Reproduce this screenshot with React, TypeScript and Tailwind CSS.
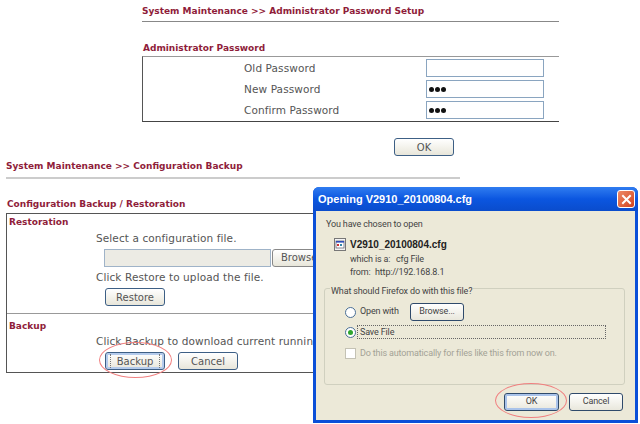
const dv = "font-['DejaVu_Sans',sans-serif]";
const bodyText = `text-[10.5px] leading-[13px] text-[#555] tracking-[0.1px] whitespace-nowrap ${dv}`;

function PageButton({ label, className = '', focused }: { label: string; className?: string; focused?: boolean }) {
  return (
    <div className={`w-[60px] h-[18px] flex items-center justify-center rounded-[3px] border border-[#3d5f85] bg-gradient-to-b from-white to-[#e8e6da] text-[10px] text-[#555] ${dv} ${className}`}>
      {focused ? (
        <div className="w-[50px] h-[14px] flex items-center justify-center border-x border-dotted border-[#777]">{label}</div>
      ) : (
        label
      )}
    </div>
  );
}

function PasswordRow({ label, dots }: { label: string; dots?: boolean }) {
  return (
    <div className="flex items-center h-[18px]">
      <div className={`w-[182px] ${bodyText}`}>{label}</div>
      <div className="w-[118px] h-[18px] border border-[#8aa5c0] bg-white flex items-center pl-[2px] gap-px">
        {dots && (
          <>
            <span className="w-[5px] h-[5px] rounded-full bg-[#111]" />
            <span className="w-[5px] h-[5px] rounded-full bg-[#111]" />
            <span className="w-[5px] h-[5px] rounded-full bg-[#111]" />
          </>
        )}
      </div>
    </div>
  );
}

function Heading({ children, className = '' }: { children: React.ReactNode; className?: string }) {
  return <div className={`font-bold text-[#8f1d3a] text-[9px] whitespace-nowrap leading-[12px] ${dv} ${className}`}>{children}</div>;
}

function DialogButton({ label, className = '' }: { label: string; className?: string }) {
  return (
    <div className={`flex items-center justify-center rounded-[3px] border border-[#2f4a6b] bg-gradient-to-b from-white to-[#e9e7dc] text-[9px] text-[#444] ${className}`}>
      {label}
    </div>
  );
}

function RedEllipse({ className }: { className: string }) {
  return <div className={`absolute rounded-[50%] border border-[#f08080] ${className}`} />;
}

function OpenDialog() {
  return (
    <div className="absolute left-[313px] top-[187px] w-[325px] h-[236px] flex flex-col rounded-t-[6px] bg-[#0a4fd8] font-['Roboto',sans-serif]">
      <div className="h-[24px] shrink-0 flex items-center justify-between pl-[5px] pr-[3px] rounded-t-[6px] bg-gradient-to-b from-[#2f7cf0] via-[#0b56e0] to-[#0a4ccc]">
        <span className="font-bold text-[11px] text-white whitespace-nowrap font-['Liberation_Sans',sans-serif]">Opening V2910_20100804.cfg</span>
        <div className="w-[18px] h-[18px] rounded-[3px] border border-white bg-gradient-to-br from-[#ee8a66] to-[#d0401c] flex items-center justify-center">
          <svg width="11" height="11" viewBox="0 0 11 11">
            <path d="M2 2 L9 9 M9 2 L2 9" stroke="white" strokeWidth="2" strokeLinecap="square" />
          </svg>
        </div>
      </div>
      <div className="flex-1 mx-[3px] mb-[3px] bg-[#ece9d8] pt-[6px] px-[8px] text-[9px] tracking-[-0.15px] text-[#444] flex flex-col">
        <div className="h-[14px] leading-[14px] ml-[2px]">You have chosen to open</div>
        <div className="flex items-center h-[14px] mt-[6px] ml-[10px] gap-[4px]">
          <svg width="12" height="13" viewBox="0 0 12 13" className="shrink-0">
            <rect x="0.5" y="0.5" width="11" height="12" fill="#f4f4f4" stroke="#777" />
            <rect x="2" y="3" width="8" height="7" fill="#fff" stroke="#556" strokeWidth="0.7" />
            <rect x="2" y="3" width="8" height="1.6" fill="#2e4bb5" />
            <rect x="3" y="6" width="2" height="2" fill="#c33" />
            <rect x="6" y="6" width="2" height="2" fill="#38a" />
          </svg>
          <span className="font-bold text-[10px] tracking-normal text-[#222] whitespace-nowrap font-['Liberation_Sans',sans-serif]">V2910_20100804.cfg</span>
        </div>
        <div className="flex h-[13px] leading-[13px] mt-[2px] ml-[26px] whitespace-nowrap">
          <span className="w-[46px]">which is a:</span>
          <span>cfg File</span>
        </div>
        <div className="flex h-[13px] leading-[13px] ml-[26px] whitespace-nowrap">
          <span className="w-[25px]">from:</span>
          <span>http://192.168.8.1</span>
        </div>
        <div className="relative mt-[9px] w-[301px] h-[97px] rounded-[3px] border border-[#d0d0bf] pl-[20px]">
          <div className="absolute left-[5px] -top-[4px] bg-[#ece9d8] px-[1px] leading-[12px] whitespace-nowrap">What should Firefox do with this file?</div>
          <div className="flex items-center h-[18px] mt-[14px]">
            <div className="w-[11px] h-[11px] rounded-full border border-[#4a6f96] bg-white" />
            <span className="ml-[4px] w-[50px]">Open with</span>
            <DialogButton label="Browse..." className="w-[54px] h-[18px]" />
          </div>
          <div className="flex items-center h-[14px] mt-[4px]">
            <div className="w-[11px] h-[11px] rounded-full border border-[#4a6f96] bg-white flex items-center justify-center">
              <div className="w-[5px] h-[5px] rounded-full bg-[#2fa52f]" />
            </div>
            <div className="ml-[1px] w-[249px] h-[14px] border border-dotted border-[#666] pl-[2px] leading-[12px]">Save File</div>
          </div>
          <div className="flex items-center h-[11px] mt-[9px]">
            <div className="w-[11px] h-[11px] border border-[#c4c2b4] bg-white" />
            <span className="ml-[4px] text-[#a3a296] whitespace-nowrap">Do this automatically for files like this from now on.</span>
          </div>
        </div>
        <div className="flex justify-end gap-[10px] mt-[8px] w-[301px]">
          <DialogButton label="OK" className="w-[55px] h-[18px] shadow-[inset_0_0_0_2px_#a9c3ea]" />
          <DialogButton label="Cancel" className="w-[54px] h-[18px] mr-[2px]" />
        </div>
      </div>
    </div>
  );
}

export default function App() {
  return (
    <div className="relative w-[640px] h-[424px] overflow-hidden bg-white">
      {/* Administrator password */}
      <div className="ml-[142px] w-[417px] pt-[5px]">
        <Heading>System Maintenance &gt;&gt; Administrator Password Setup</Heading>
        <div className="mt-[4px] h-px bg-[#888]" />
        <Heading className="mt-[20px] ml-px">Administrator Password</Heading>
        <div className="mt-[2px] h-[66px] border-t border-b border-l border-t-[#999] border-b-[#444] border-l-[#555] pl-[101px] pt-[2px] flex flex-col gap-[3px]">
          <PasswordRow label="Old Password" />
          <PasswordRow label="New Password" dots />
          <PasswordRow label="Confirm Password" dots />
        </div>
        <PageButton label="OK" className="mt-[16px] ml-[252px]" />
      </div>

      {/* Configuration backup */}
      <div className="ml-[6px] w-[454px] mt-[4px]">
        <Heading>System Maintenance &gt;&gt; Configuration Backup</Heading>
        <div className="mt-[5px] h-[2px] bg-[#ccc]" />
        <Heading className="mt-[19px] ml-px">Configuration Backup / Restoration</Heading>
        <div className="mt-[3px] h-[160px] border border-[#555] pl-[2px] pt-[2px]">
          <Heading>Restoration</Heading>
          <div className="pl-[87px]">
            <div className={`mt-[4px] ${bodyText}`}>Select a configuration file.</div>
            <div className="flex mt-[4px] ml-[8px]">
              <div className="w-[167px] h-[18px] border border-[#9fb3c8] bg-[#ecebe4]" />
              <div className={`w-[60px] h-[18px] ml-px rounded-[3px] border border-[#888] bg-gradient-to-b from-white to-[#e8e6da] text-[10px] text-[#555] pl-[8px] leading-[16px] ${dv}`}>Browse</div>
            </div>
            <div className={`mt-[4px] ${bodyText}`}>Click Restore to upload the file.</div>
            <PageButton label="Restore" className="mt-[4px] ml-[9px]" />
          </div>
          <div className="mt-[7px] -ml-[2px] h-px bg-[#999]" />
          <Heading className="mt-[6px]">Backup</Heading>
          <div className="pl-[87px]">
            <div className={`mt-[3px] ${bodyText}`}>Click Backup to download current running</div>
            <div className="flex mt-[4px] ml-[9px] gap-[13px]">
              <PageButton label="Backup" focused className="h-[17px] border-[#2f5f9f] shadow-[inset_0_0_0_2px_#b4cbec]" />
              <PageButton label="Cancel" className="h-[17px]" />
            </div>
          </div>
        </div>
      </div>

      <OpenDialog />

      {/* Hand-drawn highlights */}
      <RedEllipse className="left-[99px] top-[342px] w-[73px] h-[36px]" />
      <RedEllipse className="left-[495px] top-[383px] w-[72px] h-[35px]" />
    </div>
  );
}
